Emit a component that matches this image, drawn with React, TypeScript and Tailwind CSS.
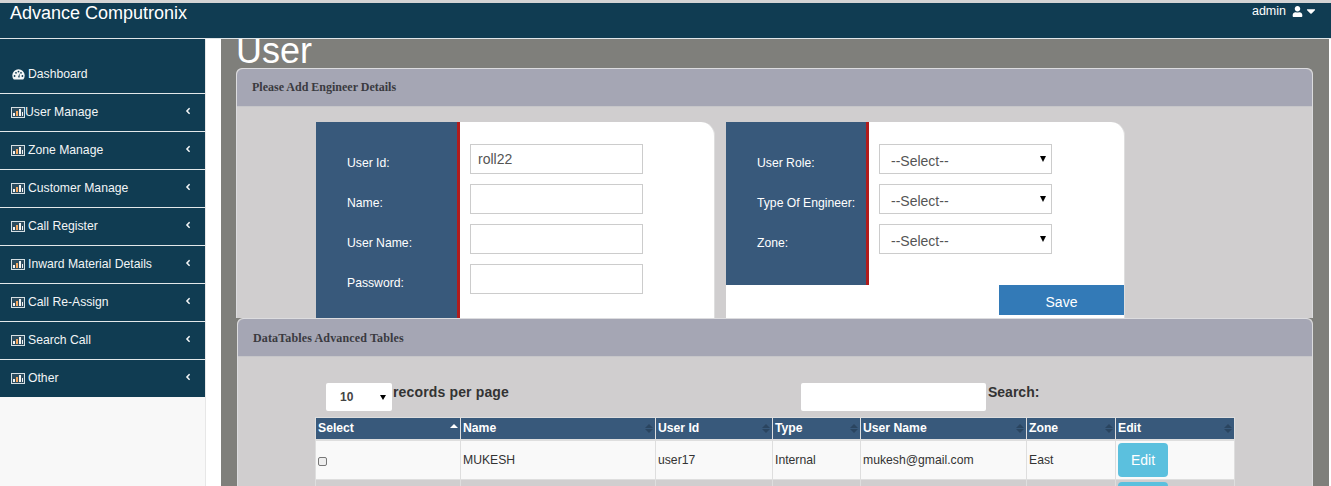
import { FaAngleLeft, FaCaretDown, FaUser } from 'react-icons/fa';

const menu = [
  'User Manage',
  'Zone Manage',
  'Customer Manage',
  'Call Register',
  'Inward Material Details',
  'Call Re-Assign',
  'Search Call',
  'Other',
];

const columns = [
  { name: 'Select', width: 'w-[145px]' },
  { name: 'Name', width: 'w-[195px]' },
  { name: 'User Id', width: 'w-[117px]' },
  { name: 'Type', width: 'w-[88px]' },
  { name: 'User Name', width: 'w-[166px]' },
  { name: 'Zone', width: 'w-[89px]' },
  { name: 'Edit', width: 'w-[119px]' },
];

function ChartIcon() {
  return (
    <svg width="14" height="11" viewBox="0 0 14 11" className="shrink-0">
      <rect x="0" y="0" width="14" height="11" fill="#d5dfe3" />
      <rect x="1" y="1" width="12" height="9" fill="#2c4c5e" />
      <rect x="2" y="6" width="2" height="3" fill="#f4f4f4" />
      <rect x="5" y="4" width="2" height="5" fill="#f4a860" />
      <rect x="8" y="2" width="2" height="7" fill="#f4f4f4" />
      <rect x="11" y="5" width="1" height="4" fill="#f4f4f4" />
    </svg>
  );
}

function DashboardIcon() {
  return (
    <svg width="13" height="11" viewBox="0 0 13 11" className="shrink-0">
      <path d="M1.8 10.5A6.2 6.2 0 1 1 11.2 10.5Z" fill="#f2f5f6" />
      <circle cx="2.6" cy="7" r="0.9" fill="#103c52" />
      <circle cx="4" cy="3.8" r="0.9" fill="#103c52" />
      <circle cx="6.5" cy="2.6" r="0.9" fill="#103c52" />
      <circle cx="9" cy="3.8" r="0.9" fill="#103c52" />
      <circle cx="10.4" cy="7" r="0.9" fill="#103c52" />
      <path d="M6 8.2L7.6 4.2L7.6 8.6Z" fill="#103c52" />
    </svg>
  );
}

function SortArrows({ active }: { active?: boolean }) {
  if (active) {
    return <span className="ml-auto mb-[5px] h-0 w-0 border-x-[4px] border-b-[4px] border-x-transparent border-b-white" />;
  }
  return (
    <span className="ml-auto flex flex-col gap-[1px]">
      <span className="h-0 w-0 border-x-[4px] border-b-[4px] border-x-transparent border-b-[#2a4560]" />
      <span className="h-0 w-0 border-x-[4px] border-t-[4px] border-x-transparent border-t-[#2a4560]" />
    </span>
  );
}

function TextField({ value }: { value?: string }) {
  return (
    <input
      readOnly
      value={value ?? ''}
      className="h-[30px] w-[173px] border border-[#ccc] bg-white px-[7px] text-sm text-[#555] outline-none"
    />
  );
}

function SelectField() {
  return (
    <div className="relative h-[30px] w-[173px]">
      <select className="h-full w-full appearance-none border border-[#ccc] bg-white px-[11px] pt-[3px] text-sm text-[#555] outline-none">
        <option>--Select--</option>
      </select>
      <span className="absolute right-[6px] top-[12px] h-0 w-0 border-x-[3.5px] border-t-[6px] border-x-transparent border-t-black" />
    </div>
  );
}

function PanelHeading({ title, second }: { title: string; second?: boolean }) {
  return (
    <div
      className={`flex h-[38px] items-center rounded-t-[6px] border-b border-[#c6c6c9] bg-[#a5a6b4] pl-[15px] font-['Liberation_Serif',serif] text-xs font-bold text-[#3a3a40] ${
        second ? 'tracking-[0.15px]' : 'pb-[1px]'
      }`}
    >
      {title}
    </div>
  );
}

export default function App() {
  return (
    <div className="flex h-[486px] w-[1331px] flex-col overflow-hidden bg-white font-['Liberation_Sans',Arial,sans-serif]">
      {/* Top bar */}
      <header className="flex h-[39px] shrink-0 items-start justify-between border-t-[3px] border-b border-t-[#d4d4d4] border-b-[#dfe5e8] bg-[#103c52] text-white">
        <span className="pl-[10px] text-lg leading-[20px]">Advance Computronix</span>
        <span className="flex items-center gap-[6px] pr-[13px] pt-[1px] text-[12.5px] leading-[14px]">
          admin
          <FaUser className="h-[11px] w-[11px]" />
          <FaCaretDown className="-ml-[5px] h-[14px] w-[14px]" />
        </span>
      </header>

      <div className="flex min-h-0 flex-1">
        {/* Sidebar */}
        <aside className="w-[206px] shrink-0 border-r border-[#e7e7e7] bg-[#f8f8f8]">
          <nav className="bg-[#103c52] text-[12.2px] text-[#f2f5f6]">
            <div className="flex h-[55px] items-center gap-[3px] border-b border-[#e3e8ea] pl-[12px] pt-[16px]">
              <DashboardIcon />
              Dashboard
            </div>
            {menu.map((label, i) => (
              <div
                key={label}
                className={
                  i === menu.length - 1
                    ? 'flex h-[37px] items-center pl-[11px] pr-[13px]'
                    : 'flex h-[38px] items-center border-b border-[#e3e8ea] pl-[11px] pr-[13px]'
                }
              >
                <ChartIcon />
                <span className={i === 0 ? '' : 'ml-[3px]'}>{label}</span>
                <FaAngleLeft className="ml-auto mb-[3px] h-[10px] w-[8px]" />
              </div>
            ))}
          </nav>
        </aside>

        <div className="w-[15px] shrink-0 bg-white" />

        {/* Main column */}
        <main className="w-[1108px] shrink-0 overflow-hidden bg-[#7f7f7b] pl-[15px] pr-[16px]">
          <div className="h-[29px] overflow-hidden">
            <h1 className="-mt-[6px] text-4xl leading-[36px] text-white">User</h1>
          </div>

          <section className="h-[250px] rounded-t-[6px] border-x border-t border-[#dcdcdf] bg-[#d0cecf]">
            <PanelHeading title="Please Add Engineer Details" />
            <div className="flex gap-[11px] pl-[79px] pt-[15px]">
              <div className="flex h-[196px] w-[399px] overflow-hidden rounded-tr-[14px] border-r border-[#dedede] bg-white">
                <div className="flex w-[144px] flex-col gap-[22px] border-r-[3px] border-[#b01c1c] bg-[#38597b] pl-[31px] pt-[32px] text-[12.2px] leading-[18px] text-white">
                  <span>User Id:</span>
                  <span>Name:</span>
                  <span>User Name:</span>
                  <span>Password:</span>
                </div>
                <div className="flex flex-col gap-[10px] pl-[10px] pt-[22px]">
                  <TextField value="roll22" />
                  <TextField />
                  <TextField />
                  <TextField />
                </div>
              </div>

              <div className="h-[196px] w-[399px] overflow-hidden rounded-tr-[14px] border-r border-[#dedede] bg-white">
                <div className="flex h-[163px]">
                  <div className="flex w-[143px] flex-col gap-[22px] border-r-[3px] border-[#b01c1c] bg-[#38597b] pl-[31px] pt-[32px] text-[12.2px] leading-[18px] text-white">
                    <span>User Role:</span>
                    <span>Type Of Engineer:</span>
                    <span>Zone:</span>
                  </div>
                  <div className="flex flex-col gap-[10px] pl-[10px] pt-[22px]">
                    <SelectField />
                    <SelectField />
                    <SelectField />
                  </div>
                </div>
                <div className="flex justify-end">
                  <button className="h-[30px] w-[125px] bg-[#337ab7] pt-[3px] text-sm text-white">Save</button>
                </div>
              </div>
            </div>
          </section>

          <section className="ml-[1px] h-[168px] rounded-t-[6px] border-x border-t border-[#dcdcdf] bg-[#d0cecf]">
            <PanelHeading title="DataTables Advanced Tables" second />
            <div className="flex h-[60px] items-start pl-[88px] pt-[26px] text-sm font-bold leading-[18px] tracking-[0.15px] text-[#333]">
              <div className="relative h-[28px] w-[66px]">
                <select className="h-full w-full appearance-none rounded-[2px] bg-white pl-[14px] text-xs font-bold text-[#444] outline-none">
                  <option>10</option>
                </select>
                <span className="absolute right-[6px] top-[12px] h-0 w-0 border-x-[3.5px] border-t-[5px] border-x-transparent border-t-black" />
              </div>
              <span className="ml-[1px]">records per page</span>
              <input readOnly className="ml-[292px] h-[28px] w-[185px] rounded-[2px] bg-white outline-none" />
              <span className="ml-[2px] tracking-normal">Search:</span>
            </div>

            <table className="ml-[77px] table-fixed border-collapse text-[12.2px] text-[#333]">
              <thead>
                <tr className="h-[22px] bg-[#38597b] text-white">
                  {columns.map((col, i) => (
                    <th key={col.name} className={`${col.width} border border-[#dedede] border-b-[2px] px-[2px] text-left font-bold`}>
                      <span className="flex items-center">
                        {col.name}
                        <SortArrows active={i === 0} />
                      </span>
                    </th>
                  ))}
                </tr>
              </thead>
              <tbody>
                <tr className="h-[40px] bg-[#f9f9f9]">
                  <td className="border border-[#dedede] px-[2px]">
                    <input type="checkbox" readOnly className="mt-[4px] block h-[9px] w-[9px] appearance-none rounded-[2px] border border-[#777] bg-[#eee]" />
                  </td>
                  <td className="border border-[#dedede] px-[2px]">MUKESH</td>
                  <td className="border border-[#dedede] px-[2px]">user17</td>
                  <td className="border border-[#dedede] px-[2px]">Internal</td>
                  <td className="border border-[#dedede] px-[2px]">mukesh@gmail.com</td>
                  <td className="border border-[#dedede] px-[2px]">East</td>
                  <td className="border border-[#dedede] px-[2px]">
                    <button className="block h-[34px] w-[50px] rounded bg-[#5bc0de] text-sm text-white">Edit</button>
                  </td>
                </tr>
                <tr className="h-[40px]">
                  <td className="border border-[#dedede]" />
                  <td className="border border-[#dedede]" />
                  <td className="border border-[#dedede]" />
                  <td className="border border-[#dedede]" />
                  <td className="border border-[#dedede]" />
                  <td className="border border-[#dedede]" />
                  <td className="border border-[#dedede] px-[2px] align-top pt-[2px]">
                    <button className="block h-[34px] w-[50px] rounded bg-[#5bc0de] text-sm text-white">Edit</button>
                  </td>
                </tr>
              </tbody>
            </table>
          </section>
        </main>

        <div className="flex-1 bg-white" />
      </div>
    </div>
  );
}
